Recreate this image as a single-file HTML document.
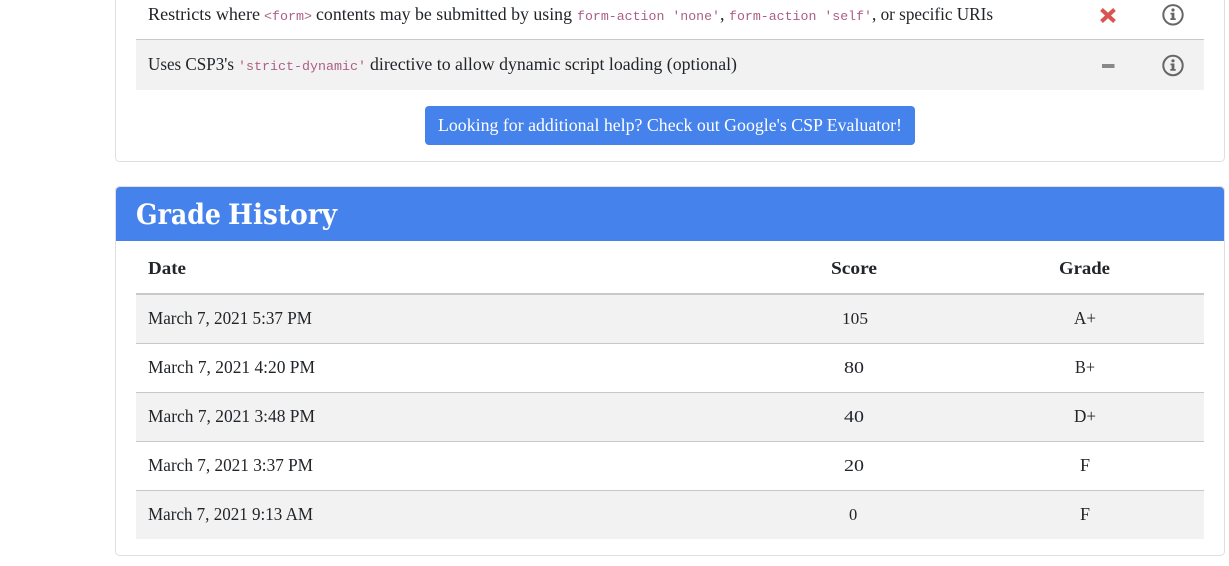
<!DOCTYPE html>
<html><head><meta charset="utf-8"><style>
html,body{margin:0;padding:0;background:#fff;width:1229px;height:566px;overflow:hidden}
svg{display:block}
text{font-family:"Liberation Serif",serif;font-size:18px;fill:#212529}
.c{font-family:"Liberation Mono",monospace;font-size:13.3px;fill:#ad5f85}
.n{font-size:16.5px}
.b{font-weight:bold}
.h{fill:#fff;font-size:28px;font-family:"DejaVu Serif",serif;font-weight:bold}
</style></head><body>
<svg width="1229" height="566" viewBox="0 0 1229 566" xmlns="http://www.w3.org/2000/svg">
<rect x="115.5" y="-20" width="1109" height="181.5" rx="4" fill="#fff" stroke="#dfdfdf"/>
<rect x="136" y="40" width="1068" height="50" fill="#f2f2f2"/>
<rect x="136" y="39" width="1068" height="1" fill="#c8c8c8"/>
<text x="148" y="20" textLength="112" lengthAdjust="spacingAndGlyphs">Restricts where</text>
<text class="c" x="264" y="20" textLength="48" lengthAdjust="spacingAndGlyphs">&lt;form&gt;</text>
<text x="316" y="20" textLength="256" lengthAdjust="spacingAndGlyphs">contents may be submitted by using</text>
<text class="c" x="577" y="20" textLength="143" lengthAdjust="spacingAndGlyphs">form-action 'none'</text>
<text x="720" y="20">,</text>
<text class="c" x="729" y="20" textLength="143" lengthAdjust="spacingAndGlyphs">form-action 'self'</text>
<text x="872" y="20" textLength="121" lengthAdjust="spacingAndGlyphs">, or specific URIs</text>
<text x="148" y="70" textLength="86" lengthAdjust="spacingAndGlyphs">Uses CSP3's</text>
<text class="c" x="238" y="70" textLength="128" lengthAdjust="spacingAndGlyphs">'strict-dynamic'</text>
<text x="370" y="70" textLength="367" lengthAdjust="spacingAndGlyphs">directive to allow dynamic script loading (optional)</text>
<path d="M1101.500 9.500L1114.500 21.500M1114.500 9.500L1101.500 21.500" stroke="#d9534f" stroke-width="4" fill="none"/>
<rect x="1102" y="64" width="12.500" height="4" fill="#888"/>
<g fill="none" stroke="#666" stroke-width="2"><circle cx="1173" cy="14.800" r="9.700"/><circle cx="1173" cy="65.500" r="9.700"/></g>
<g fill="#666"><circle cx="1173" cy="10" r="1.600"/><path d="M1170.500 12.800h3.900v5.500h1.300v1.700h-5.400v-1.700h1.300v-3.800h-1.100z"/><circle cx="1173" cy="60.800" r="1.600"/><path d="M1170.500 63.500h3.900v5.500h1.300v1.700h-5.400v-1.700h1.300v-3.800h-1.100z"/></g>
<rect x="425" y="106" width="490" height="39" rx="4" fill="#4582ec"/>
<text x="438" y="131" textLength="464" lengthAdjust="spacingAndGlyphs" style="fill:#fff">Looking for additional help? Check out Google's CSP Evaluator!</text>
<rect x="115.500" y="186.500" width="1109" height="369" rx="4" fill="#fff" stroke="#dfdfdf"/>
<path d="M116 241V191a4 4 0 0 1 4-4H1220a4 4 0 0 1 4 4V241z" fill="#4582ec"/>
<text x="136" y="224" textLength="85" lengthAdjust="spacingAndGlyphs" class="h">Grade</text>
<text x="228" y="224" textLength="109" lengthAdjust="spacingAndGlyphs" class="h">History</text>
<text class="b" x="148" y="274" textLength="38" lengthAdjust="spacingAndGlyphs">Date</text>
<text class="b" x="831" y="274" textLength="46" lengthAdjust="spacingAndGlyphs">Score</text>
<text class="b" x="1059" y="274" textLength="51" lengthAdjust="spacingAndGlyphs">Grade</text>
<rect x="136" y="293" width="1068" height="2" fill="#c8c8c8"/>
<rect x="136" y="295" width="1068" height="48" fill="#f2f2f2"/>
<rect x="136" y="343" width="1068" height="1" fill="#c8c8c8"/>
<rect x="136" y="392" width="1068" height="1" fill="#c8c8c8"/>
<rect x="136" y="393" width="1068" height="48" fill="#f2f2f2"/>
<rect x="136" y="441" width="1068" height="1" fill="#c8c8c8"/>
<rect x="136" y="490" width="1068" height="1" fill="#c8c8c8"/>
<rect x="136" y="491" width="1068" height="48" fill="#f2f2f2"/>
<text x="148" y="324" textLength="164" lengthAdjust="spacingAndGlyphs">March 7, 2021 5:37 PM</text>
<text x="148" y="373" textLength="167" lengthAdjust="spacingAndGlyphs">March 7, 2021 4:20 PM</text>
<text x="148" y="422" textLength="167" lengthAdjust="spacingAndGlyphs">March 7, 2021 3:48 PM</text>
<text x="148" y="471" textLength="165" lengthAdjust="spacingAndGlyphs">March 7, 2021 3:37 PM</text>
<text x="148" y="520" textLength="165" lengthAdjust="spacingAndGlyphs">March 7, 2021 9:13 AM</text>
<text class="n" x="842" y="324" textLength="26" lengthAdjust="spacingAndGlyphs">105</text>
<text class="n" x="844" y="373" textLength="20" lengthAdjust="spacingAndGlyphs">80</text>
<text class="n" x="844" y="422" textLength="20" lengthAdjust="spacingAndGlyphs">40</text>
<text class="n" x="844" y="471" textLength="20" lengthAdjust="spacingAndGlyphs">20</text>
<text class="n" x="849" y="520">0</text>
<text x="1074" y="324" textLength="22" lengthAdjust="spacingAndGlyphs">A+</text>
<text x="1075" y="373" textLength="20" lengthAdjust="spacingAndGlyphs">B+</text>
<text x="1074" y="422" textLength="22" lengthAdjust="spacingAndGlyphs">D+</text>
<text x="1080" y="471">F</text>
<text x="1080" y="520">F</text>
</svg>
</body></html>
